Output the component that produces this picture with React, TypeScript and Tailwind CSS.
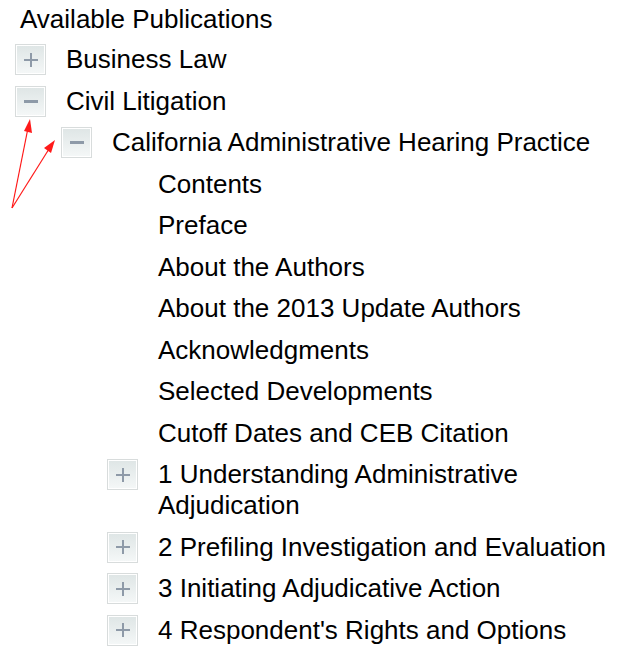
const rowCls = "flex items-start gap-[20px] py-[5.25px] leading-[31px]";

type Kind = "plus" | "minus" | "leaf";
type Node = { label: string; level: number; kind: Kind };

const items: Node[] = [
  { label: "Business Law", level: 0, kind: "plus" },
  { label: "Civil Litigation", level: 0, kind: "minus" },
  { label: "California Administrative Hearing Practice", level: 1, kind: "minus" },
  { label: "Contents", level: 2, kind: "leaf" },
  { label: "Preface", level: 2, kind: "leaf" },
  { label: "About the Authors", level: 2, kind: "leaf" },
  { label: "About the 2013 Update Authors", level: 2, kind: "leaf" },
  { label: "Acknowledgments", level: 2, kind: "leaf" },
  { label: "Selected Developments", level: 2, kind: "leaf" },
  { label: "Cutoff Dates and CEB Citation", level: 2, kind: "leaf" },
  { label: "1 Understanding Administrative Adjudication", level: 2, kind: "plus" },
  { label: "2 Prefiling Investigation and Evaluation", level: 2, kind: "plus" },
  { label: "3 Initiating Adjudicative Action", level: 2, kind: "plus" },
  { label: "4 Respondent's Rights and Options", level: 2, kind: "plus" },
];

const indents = ["pl-0", "pl-[46px]", "pl-[92px]"];

function Toggle({ kind }: { kind: Kind }) {
  if (kind === "leaf") return <div className="w-[31px] h-[31px] shrink-0" />;
  return (
    <div className="w-[31px] h-[31px] shrink-0 border border-[#d8dcdc] bg-white p-px">
      <div className="grid size-full place-items-center bg-gradient-to-b from-[#dfe6e6] to-[#f4f7f7]">
        {kind === "plus" ? (
          <div className="col-start-1 row-start-1 w-[14px] h-[2px] bg-[#8e9aa8]" />
        ) : (
          <div className="col-start-1 row-start-1 w-[14px] h-[3px] bg-[#8e9aa8]" />
        )}
        {kind === "plus" && <div className="col-start-1 row-start-1 w-[2px] h-[14px] bg-[#8e9aa8]" />}
      </div>
    </div>
  );
}

export default function App() {
  return (
    <div
      className="relative w-[629px] h-[655px] overflow-hidden bg-white text-black text-[26px] pl-[15px] pr-[6px] pt-[4px]"
      style={{ fontFamily: '"Liberation Sans", Arial, Helvetica, sans-serif' }}
    >
      <div className="pl-[5px] leading-[31px] pb-[4px]">Available Publications</div>
      {items.map((it) => (
        <div key={it.label} className={`${rowCls} ${indents[it.level]}`}>
          <Toggle kind={it.kind} />
          <div className="min-w-0 flex-1">{it.label}</div>
        </div>
      ))}

      {/* red annotation arrows */}
      <svg className="absolute left-0 top-0" width="80" height="220" viewBox="0 0 80 220">
        <g stroke="#ff1a1a" strokeWidth="1.2">
          <line x1="12" y1="208" x2="28" y2="128" />
          <line x1="12" y1="208" x2="49" y2="149" />
        </g>
        <polygon points="30,119 24,131 32,133" fill="#ff1a1a" />
        <polygon points="55,140 44,148 51,153" fill="#ff1a1a" />
      </svg>
    </div>
  );
}
